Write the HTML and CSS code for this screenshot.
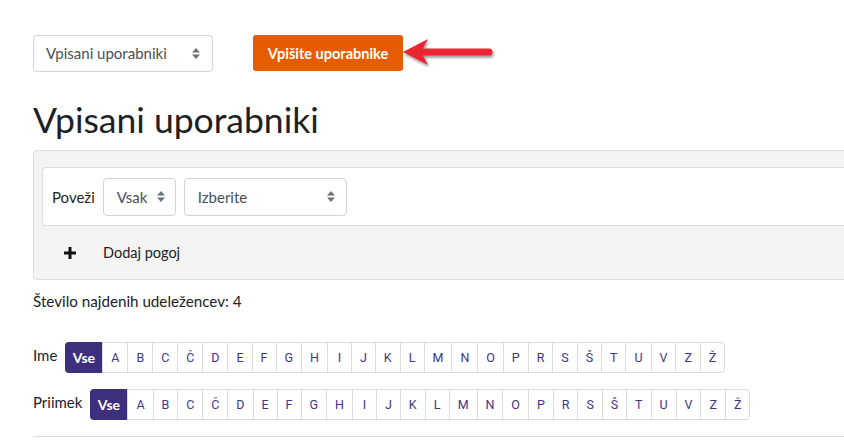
FILE: index.html
```html
<!DOCTYPE html>
<html lang="sl">
<head>
<meta charset="utf-8">
<link rel="stylesheet" href="styles.css">
</head>
<body>
<div class="page">
  <div class="topbar">
    <div class="select select-main">
      <span>Vpisani uporabniki</span>
      <svg class="caret" width="8" height="11" viewBox="0 0 8 11"><path d="M0 4.5 L4 0 L8 4.5 Z M0 6.5 L8 6.5 L4 11 Z" fill="#6a737b"/></svg>
    </div>
    <div class="enrol-wrap">
      <button class="btn-enrol">Vpišite uporabnike</button>
      <svg class="arrow" width="100" height="40" viewBox="0 0 100 40">
        <defs>
          <filter id="sh" x="-20%" y="-40%" width="140%" height="200%">
            <feDropShadow dx="1" dy="2" stdDeviation="1.6" flood-color="#000" flood-opacity="0.45"/>
          </filter>
        </defs>
        <g filter="url(#sh)">
          <path d="M2 18 L27 5 L22 14.5 L88 14.5 A3.5 3.5 0 0 1 88 21.5 L22 21.5 L27 31 Z" fill="#ea2630"/>
        </g>
      </svg>
    </div>
  </div>

  <h2 class="title">Vpisani uporabniki</h2>

  <div class="filters">
    <div class="filter-row">
      <span class="label">Poveži</span>
      <div class="select select-sm">
        <span>Vsak</span>
        <svg class="caret" width="8" height="11" viewBox="0 0 8 11"><path d="M0 4.5 L4 0 L8 4.5 Z M0 6.5 L8 6.5 L4 11 Z" fill="#6a737b"/></svg>
      </div>
      <div class="select select-type">
        <span>Izberite</span>
        <svg class="caret" width="8" height="11" viewBox="0 0 8 11"><path d="M0 4.5 L4 0 L8 4.5 Z M0 6.5 L8 6.5 L4 11 Z" fill="#6a737b"/></svg>
      </div>
    </div>
    <div class="add-row">
      <svg class="plus" width="12" height="12" viewBox="0 0 12 12"><path d="M4.5 0 H7.5 V4.5 H12 V7.5 H7.5 V12 H4.5 V7.5 H0 V4.5 H4.5 Z" fill="#111"/></svg>
      <span>Dodaj pogoj</span>
    </div>
  </div>

  <p class="count">Število najdenih udeležencev: 4</p>

  <div class="initials first">
    <span class="ilabel">Ime</span>
    <div class="bar">
      <span class="cell active">Vse</span><span class="cell">A</span><span class="cell">B</span><span class="cell">C</span><span class="cell">Č</span><span class="cell">D</span><span class="cell">E</span><span class="cell">F</span><span class="cell">G</span><span class="cell">H</span><span class="cell">I</span><span class="cell">J</span><span class="cell">K</span><span class="cell">L</span><span class="cell">M</span><span class="cell">N</span><span class="cell">O</span><span class="cell">P</span><span class="cell">R</span><span class="cell">S</span><span class="cell">Š</span><span class="cell">T</span><span class="cell">U</span><span class="cell">V</span><span class="cell">Z</span><span class="cell">Ž</span>
    </div>
  </div>
  <div class="initials second">
    <span class="ilabel">Priimek</span>
    <div class="bar">
      <span class="cell active">Vse</span><span class="cell">A</span><span class="cell">B</span><span class="cell">C</span><span class="cell">Č</span><span class="cell">D</span><span class="cell">E</span><span class="cell">F</span><span class="cell">G</span><span class="cell">H</span><span class="cell">I</span><span class="cell">J</span><span class="cell">K</span><span class="cell">L</span><span class="cell">M</span><span class="cell">N</span><span class="cell">O</span><span class="cell">P</span><span class="cell">R</span><span class="cell">S</span><span class="cell">Š</span><span class="cell">T</span><span class="cell">U</span><span class="cell">V</span><span class="cell">Z</span><span class="cell">Ž</span>
    </div>
  </div>
  <hr class="rule">
</div>
</body>
</html>
```
FILE: styles.css
```css
html, body {
  margin: 0;
  padding: 0;
  background: #fff;
  overflow: hidden;
}
body {
  font-family: "Lato", "Liberation Sans", sans-serif;
  color: #1d2125;
  font-size: 15px;
}
.page {
  width: 900px;
  padding: 34px 0 0 33px;
}
.topbar {
  display: flex;
  align-items: center;
  height: 38px;
}
.select {
  box-sizing: border-box;
  display: flex;
  align-items: center;
  justify-content: space-between;
  border: 1px solid #ced4da;
  border-radius: 4px;
  background: #fff;
  color: #495057;
  font-size: 15px;
}
.select-main {
  width: 180px;
  height: 37px;
  padding: 0 12px 0 12px;
}
.caret { flex: none; }
.enrol-wrap {
  display: flex;
  align-items: center;
  margin-left: 40px;
}
.btn-enrol {
  box-sizing: border-box;
  width: 150px;
  height: 36px;
  border: none;
  border-radius: 3px;
  background: #e65c00;
  color: #fff;
  font-family: "Lato", "Liberation Sans", sans-serif;
  font-weight: 700;
  font-size: 14.5px;
  padding: 0;
}
.arrow {
  margin-left: -2px;
  margin-top: 2px;
}
.title {
  margin: 24px 0 0 0;
  font-weight: 400;
  font-size: 35.5px;
  line-height: 48px;
  height: 48px;
}
.filters {
  box-sizing: border-box;
  margin-top: 6px;
  height: 130px;
  background: #f4f4f4;
  border: 1px solid #dcdcdc;
  border-radius: 4px;
  padding: 16px 0 0 8px;
}
.filter-row {
  box-sizing: border-box;
  height: 59px;
  background: #fff;
  border: 1px solid #dcdcdc;
  border-right: none;
  border-radius: 4px 0 0 4px;
  display: flex;
  align-items: center;
  padding-left: 9px;
  gap: 8px;
}
.label {
  font-size: 15px;
}
.select-sm {
  width: 73px;
  height: 38px;
  padding: 0 10px 0 13px;
}
.select-type {
  width: 163px;
  height: 38px;
  padding: 0 11px 0 13px;
}
.add-row {
  display: flex;
  align-items: center;
  height: 53px;
  padding-left: 22px;
  font-size: 14.5px;
}
.plus { margin-right: 27px; }
.count {
  margin: 11px 0 0 0;
  font-size: 15.2px;
  line-height: 20px;
}
.initials {
  display: flex;
  align-items: center;
  height: 31px;
}
.initials.first { margin-top: 31px; }
.initials.second { margin-top: 16px; }
.ilabel {
  font-size: 15px;
  margin-right: 8px;
  margin-top: -5px;
}
.bar {
  display: flex;
  border: 1px solid #dcdcdc;
  border-radius: 4px;
  height: 31px;
  box-sizing: border-box;
}
.cell {
  box-sizing: border-box;
  display: flex;
  align-items: center;
  justify-content: center;
  min-width: 24px;
  padding: 0 7.97px;
  border-left: 1px solid #dcdcdc;
  font-family: "Roboto", "Liberation Sans", sans-serif;
  font-size: 12.5px;
  color: #3f3488;
}
.cell:first-child { border-left: none; }
.cell.active {
  background: #3d2f7e;
  color: #fff;
  font-family: "Lato", sans-serif;
  font-weight: 700;
  font-size: 14px;
  width: 37px;
  padding: 0;
  margin: -1px 0 -1px -1px;
  border-radius: 4px 0 0 4px;
}
.rule {
  margin: 16px 0 0 0;
  border: none;
  border-top: 1px solid #dcdcdc;
}
```
